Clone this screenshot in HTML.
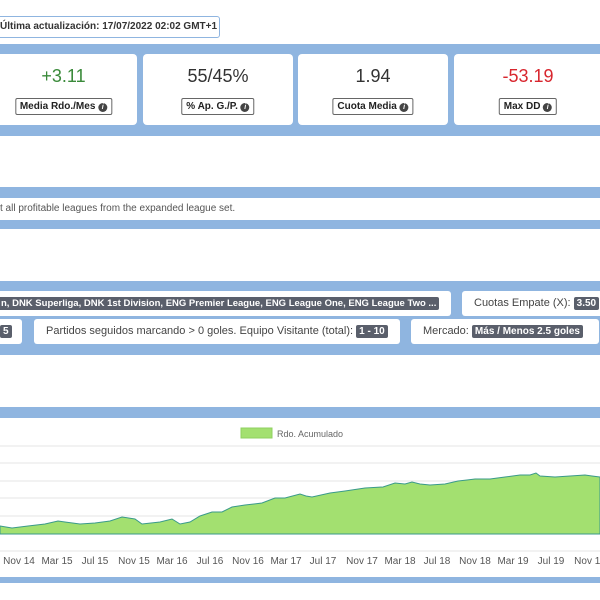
<!DOCTYPE html>
<html><head><meta charset="utf-8"><style>
*{box-sizing:border-box;margin:0;padding:0}
body{width:600px;height:600px;overflow:hidden;background:#fff;font-family:"Liberation Sans",sans-serif;position:relative;color:#333}
.a{position:absolute}
.blue{background:#8fb5e0;position:absolute;left:0;width:600px}
.card{position:absolute;background:#fff;border-radius:4px;top:54px;height:71px;text-align:center}
.val{position:absolute;top:12px;left:0;right:0;font-size:18px}
.lab{position:absolute;top:44px;left:50%;transform:translateX(-50%);border:1px solid #666;border-radius:2px;font-size:10px;font-weight:bold;padding:2px 4px;white-space:nowrap;color:#222}
.i{display:inline-block;width:9px;height:9px;border-radius:50%;background:#444;color:#fff;font-size:7px;line-height:9px;text-align:center;vertical-align:0px;font-style:italic}
.fb{position:absolute;background:#fff;border-radius:3px;font-size:11px;color:#444;white-space:nowrap;line-height:24px}
.bd{background:#5a5f6b;color:#fff;font-weight:bold;border-radius:2px;padding:1px 3px;font-size:10px}
.xl{position:absolute;top:556px;font-size:10px;color:#555;transform:translateX(-50%);white-space:nowrap}
</style></head><body>
<div class="a" style="left:-5px;top:16px;width:225px;height:22px;border:1px solid #8fb5e0;border-radius:3px;font-size:10px;font-weight:bold;line-height:20px;padding-left:4px;color:#333">Última actualización: 17/07/2022 02:02 GMT+1</div>
<div class="blue" style="top:44px;height:92px"></div>
<div class="card" style="left:-10px;width:147px"><div class="val" style="color:#3a8a3a">+3.11</div><div class="lab">Media Rdo./Mes <span class="i">i</span></div></div>
<div class="card" style="left:143px;width:150px"><div class="val">55/45%</div><div class="lab">% Ap. G./P. <span class="i">i</span></div></div>
<div class="card" style="left:298px;width:150px"><div class="val">1.94</div><div class="lab">Cuota Media <span class="i">i</span></div></div>
<div class="card" style="left:454px;width:160px"><div class="val" style="color:#d8262e;left:-12px">-53.19</div><div class="lab" style="margin-left:-6px">Max DD <span class="i">i</span></div></div>
<div class="blue" style="top:187px;height:11px"></div>
<div class="a" style="left:0;top:203px;font-size:10px;color:#555">t all profitable leagues from the expanded league set.</div>
<div class="blue" style="top:220px;height:9px"></div>
<div class="blue" style="top:281px;height:74px"></div>
<div class="fb" style="left:-10px;top:291px;width:461px;padding-left:8px"><span class="bd" style="font-size:9.5px;letter-spacing:0px">n, DNK Superliga, DNK 1st Division, ENG Premier League, ENG League One, ENG League Two ...</span></div>
<div class="fb" style="left:462px;top:291px;width:150px;padding-left:12px">Cuotas Empate (X): <span class="bd">3.50</span></div>
<div class="fb" style="left:-10px;top:319px;width:32px;padding-left:10px"><span class="bd">5</span></div>
<div class="fb" style="left:34px;top:319px;width:366px;padding-left:12px">Partidos seguidos marcando &gt; 0 goles. Equipo Visitante (total): <span class="bd">1 - 10</span></div>
<div class="fb" style="left:411px;top:319px;width:188px;padding-left:12px">Mercado: <span class="bd">Más / Menos 2.5 goles</span></div>
<div class="blue" style="top:407px;height:11px"></div>
<svg class="a" style="left:0;top:418px" width="600" height="160">
<rect x="241" y="10" width="31" height="10" fill="#a3e070" stroke="#8fd060"/>
<text x="277" y="19" font-size="9" fill="#666" font-family="Liberation Sans">Rdo. Acumulado</text>
<g stroke="#e6e6e6"><line x1="0" x2="600" y1="28" y2="28"/><line x1="0" x2="600" y1="45" y2="45"/><line x1="0" x2="600" y1="63" y2="63"/><line x1="0" x2="600" y1="80" y2="80"/><line x1="0" x2="600" y1="98" y2="98"/><line x1="0" x2="600" y1="116" y2="116"/><line x1="0" x2="600" y1="133" y2="133"/></g>
<polygon fill="#a3e070" stroke="#3a9a8a" stroke-width="1" points="0,108 12,110 28,108 45,106 58,103 65,104 80,106 95,105 110,103 122,99 135,101 142,106 160,104 172,101 180,106 190,104 200,98 212,94 222,94 232,89 245,87 262,85 275,80 285,80 300,76 306,78 312,79 330,75 345,73 365,70 383,69 395,65 405,66 412,64 420,66 430,67 445,66 458,63 467,62 475,61 490,61 505,59 520,57 530,57 536,55 540,58 555,59 570,58 585,57 592,58 600,59 600,116 0,116"/>
</svg>
<div class="xl" style="left:19px">Nov 14</div><div class="xl" style="left:57px">Mar 15</div><div class="xl" style="left:95px">Jul 15</div><div class="xl" style="left:134px">Nov 15</div><div class="xl" style="left:172px">Mar 16</div><div class="xl" style="left:210px">Jul 16</div><div class="xl" style="left:248px">Nov 16</div><div class="xl" style="left:286px">Mar 17</div><div class="xl" style="left:323px">Jul 17</div><div class="xl" style="left:362px">Nov 17</div><div class="xl" style="left:400px">Mar 18</div><div class="xl" style="left:437px">Jul 18</div><div class="xl" style="left:475px">Nov 18</div><div class="xl" style="left:513px">Mar 19</div><div class="xl" style="left:551px">Jul 19</div><div class="xl" style="left:590px">Nov 19</div>
<div class="blue" style="top:577px;height:6px"></div>
</body></html>
